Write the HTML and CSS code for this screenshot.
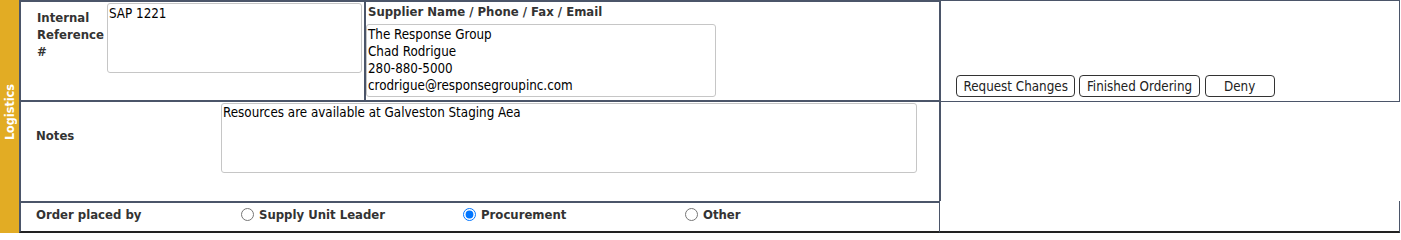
FILE: index.html
```html
<!DOCTYPE html>
<html>
<head>
<meta charset="utf-8">
<link rel="stylesheet" href="styles.css">
</head>
<body>
<div class="page">
  <div class="side"><span class="side-text">Logistics</span></div>
  <div class="main">
    <div class="row row1">
      <div class="box box1">
        <div class="lbl lbl-ref">Internal Reference #</div>
        <textarea class="ta ta-ref">SAP 1221</textarea>
        <div class="supplier">
          <div class="sup-lbl">Supplier Name / Phone / Fax / Email</div>
          <textarea class="ta ta-sup">The Response Group
Chad Rodrigue
280-880-5000
crodrigue@responsegroupinc.com</textarea>
        </div>
      </div>
      <div class="actions">
        <button class="btn">Request Changes</button>
        <button class="btn">Finished Ordering</button>
        <button class="btn btn-deny">Deny</button>
      </div>
    </div>
    <div class="row row2">
      <div class="box box2">
        <div class="lbl lbl-notes">Notes</div>
        <textarea class="ta ta-notes">Resources are available at Galveston Staging Aea</textarea>
      </div>
    </div>
    <div class="row row3">
      <div class="box box3">
        <div class="lbl lbl-order">Order placed by</div>
        <label class="opt"><input type="radio" name="placed" class="radio"><span>Supply Unit Leader</span></label>
        <label class="opt"><input type="radio" name="placed" class="radio" checked><span>Procurement</span></label>
        <label class="opt"><input type="radio" name="placed" class="radio"><span>Other</span></label>
      </div>
      <div class="filler3"></div>
    </div>
  </div>
</div>
</body>
</html>
```

FILE: styles.css
```css
html, body {
  margin: 0;
  padding: 0;
  background: #fff;
}
body {
  font-family: "DejaVu Sans Condensed", "DejaVu Sans", sans-serif;
  font-stretch: condensed;
  font-size: 13px;
  line-height: 17px;
  color: #333;
}
.page {
  display: flex;
  width: 1400px;
  height: 233px;
}
.side {
  width: 19px;
  flex: none;
  background: #e2ac24;
  display: flex;
  align-items: center;
  justify-content: center;
  padding-bottom: 8px;
  box-sizing: border-box;
}
.side-text {
  writing-mode: vertical-rl;
  transform: rotate(180deg);
  color: #fff;
  font-weight: bold;
  font-size: 12.5px;
  line-height: 19px;
}
.main {
  flex: 1;
  display: flex;
  flex-direction: column;
}
.row {
  display: flex;
}
.box {
  box-sizing: border-box;
  display: flex;
  flex: none;
}
.lbl {
  font-weight: bold;
  color: #333;
  box-sizing: border-box;
  flex: none;
}
.ta {
  font-family: inherit;
  font-stretch: inherit;
  font-size: 13.3px;
  line-height: 17px;
  color: #000;
  border: 1px solid #c6c6c6;
  border-radius: 3px;
  padding: 0 1px;
  margin: 0;
  resize: none;
  overflow: hidden;
  box-sizing: border-box;
  background: #fff;
}

/* row 1 */
.row1 {
  height: 102px;
}
.box1 {
  width: 922px;
  height: 102px;
  border: 2px solid #4b5569;
}
.lbl-ref {
  width: 86px;
  padding: 7px 0 0 16px;
}
.ta-ref {
  width: 255px;
  height: 70px;
  margin-top: 1px;
  padding-top: 1px;
}
.supplier {
  margin-left: 2px;
  border-left: 2px solid #4b5569;
  padding-left: 2px;
  flex: 1;
}
.sup-lbl {
  font-weight: bold;
  color: #333;
  line-height: 17px;
  margin-top: 1px;
  margin-bottom: 4px;
}
.ta-sup {
  width: 350px;
  height: 73px;
  margin-left: -2px;
  padding-top: 1px;
}
.actions {
  flex: 1;
  box-sizing: border-box;
  height: 102px;
  border-top: 1px solid #4b5569;
  border-right: 1px solid #4b5569;
  border-bottom: 1px solid #4b5569;
  display: flex;
  align-items: flex-end;
  gap: 4px;
  padding: 0 0 4px 15px;
}
.btn {
  font-family: inherit;
  font-stretch: inherit;
  font-size: 13.3px;
  line-height: 17px;
  color: #222;
  background: #fff;
  border: 1px solid #333;
  border-radius: 4px;
  height: 22px;
  padding: 0 6.5px;
  margin: 0;
}
.btn-deny {
  width: 70px;
  margin-left: 1px;
}

/* row 2 */
.row2 {
  height: 99px;
}
.box2 {
  width: 922px;
  height: 99px;
  border-left: 2px solid #4b5569;
  border-right: 2px solid #4b5569;
}
.lbl-notes {
  width: 200px;
  padding: 25px 0 0 15px;
}
.ta-notes {
  width: 696px;
  height: 70px;
  margin-top: 1px;
  padding-top: 0;
}

/* row 3 */
.row3 {
  height: 32px;
}
.box3 {
  width: 921px;
  height: 32px;
  border-top: 2px solid #4b5569;
  border-left: 2px solid #4b5569;
  border-right: 1px solid #4b5569;
  border-bottom: 2px solid #222;
  align-items: flex-start;
  padding-top: 3px;
}
.lbl-order {
  width: 215px;
  padding-left: 15px;
}
.opt {
  width: 222px;
  flex: none;
  display: flex;
  align-items: center;
  font-weight: bold;
  color: #333;
}
.radio {
  width: 13px;
  height: 13px;
  margin: 0 5px 0 5px;
}
.filler3 {
  flex: 1;
  box-sizing: border-box;
  height: 32px;
  border-right: 1px solid #4b5569;
  border-bottom: 2px solid #222;
}
```
